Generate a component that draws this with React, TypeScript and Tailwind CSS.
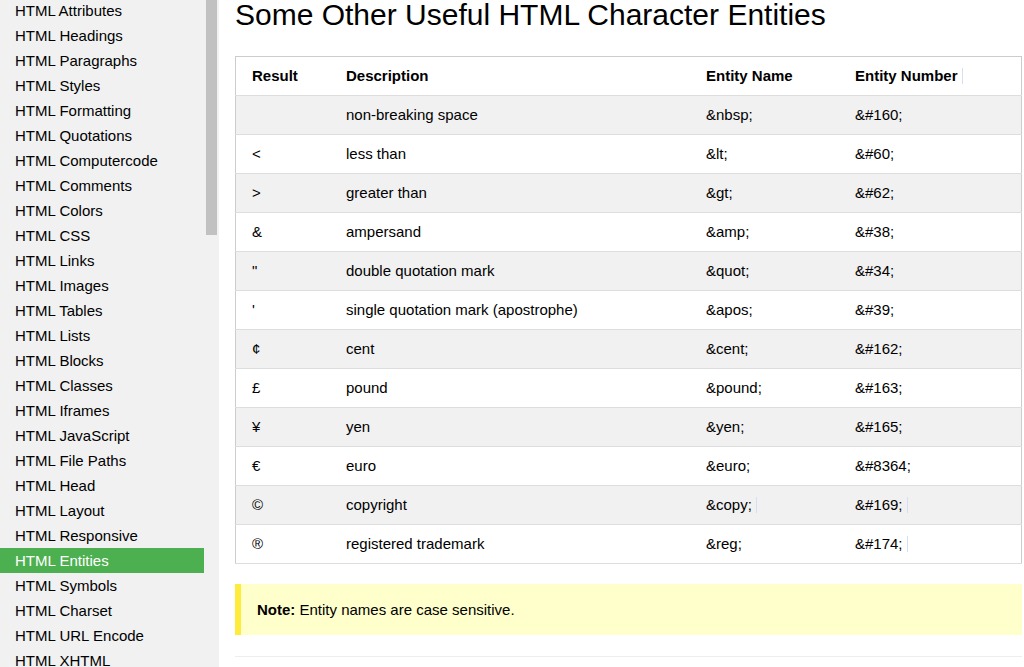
const navItems = [
  'HTML Attributes',
  'HTML Headings',
  'HTML Paragraphs',
  'HTML Styles',
  'HTML Formatting',
  'HTML Quotations',
  'HTML Computercode',
  'HTML Comments',
  'HTML Colors',
  'HTML CSS',
  'HTML Links',
  'HTML Images',
  'HTML Tables',
  'HTML Lists',
  'HTML Blocks',
  'HTML Classes',
  'HTML Iframes',
  'HTML JavaScript',
  'HTML File Paths',
  'HTML Head',
  'HTML Layout',
  'HTML Responsive',
  'HTML Entities',
  'HTML Symbols',
  'HTML Charset',
  'HTML URL Encode',
  'HTML XHTML',
];

type Row = { result: string; desc: string; name: string; num: string; mark?: boolean };

const rows: Row[] = [
  { result: '\u00a0', desc: 'non-breaking space', name: '&nbsp;', num: '&#160;' },
  { result: '<', desc: 'less than', name: '&lt;', num: '&#60;' },
  { result: '>', desc: 'greater than', name: '&gt;', num: '&#62;' },
  { result: '&', desc: 'ampersand', name: '&amp;', num: '&#38;' },
  { result: '"', desc: 'double quotation mark', name: '&quot;', num: '&#34;' },
  { result: "'", desc: 'single quotation mark (apostrophe)', name: '&apos;', num: '&#39;' },
  { result: '¢', desc: 'cent', name: '&cent;', num: '&#162;' },
  { result: '£', desc: 'pound', name: '&pound;', num: '&#163;' },
  { result: '¥', desc: 'yen', name: '&yen;', num: '&#165;' },
  { result: '€', desc: 'euro', name: '&euro;', num: '&#8364;' },
  { result: '©', desc: 'copyright', name: '&copy;', num: '&#169;', mark: true },
  { result: '®', desc: 'registered trademark', name: '&reg;', num: '&#174;', mark: true },
];

// thin caret-like line that shows up after some cells
const Caret = () => (
  <span className="inline-block w-px h-[16px] bg-[#d6deef] align-middle ml-[4px] -mt-[2px]" />
);

const App = () => {
  return (
    <div
      className="flex h-[667px] w-[1024px] overflow-hidden bg-white text-black"
      style={{ fontFamily: '"Liberation Sans", Arial, sans-serif' }}
    >
      {/* Sidebar */}
      <div className="flex w-[219px] shrink-0 bg-[#f1f1f1]">
        <ul className="w-[204px] mt-[-2px]">
          {navItems.map((item) => (
            <li
              key={item}
              className={
                item === 'HTML Entities'
                  ? 'h-[25px] leading-[25px] pl-[15px] text-[15px] bg-[#4caf50] text-white'
                  : 'h-[25px] leading-[25px] pl-[15px] text-[15px] text-black'
              }
            >
              {item}
            </li>
          ))}
        </ul>
        <div className="w-[15px] pl-[2px]">
          <div className="w-[11px] h-[235px] bg-[#c1c1c1]" />
        </div>
      </div>

      {/* Main */}
      <div className="flex-1 pl-4 pr-[2px]">
        <h2 className="text-[30px] leading-[34px] font-normal mt-[-2px] mb-6">
          Some Other Useful HTML Character Entities
        </h2>

        <table className="w-full border border-[#cccccc] border-collapse text-[15px] leading-[22px] table-fixed">
          <colgroup>
            <col className="w-[94.5px]" />
            <col className="w-[360px]" />
            <col className="w-[149px]" />
            <col />
          </colgroup>
          <thead>
            <tr className="border-b border-[#dddddd] bg-white">
              <th className="text-left font-bold py-2 pl-4">Result</th>
              <th className="text-left font-bold py-2 pl-4">Description</th>
              <th className="text-left font-bold py-2 pl-4">Entity Name</th>
              <th className="text-left font-bold py-2 pl-4">
                Entity Number
                <Caret />
              </th>
            </tr>
          </thead>
          <tbody>
            {rows.map((r, i) => (
              <tr
                key={r.desc}
                className={
                  i % 2 === 0
                    ? 'border-b border-[#dddddd] bg-[#f1f1f1]'
                    : 'border-b border-[#dddddd] bg-white'
                }
              >
                <td className="py-2 pl-4">{r.result}</td>
                <td className="py-2 pl-4">{r.desc}</td>
                <td className="py-2 pl-4">
                  {r.name}
                  {r.result === '©' && <Caret />}
                </td>
                <td className="py-2 pl-4">
                  {r.num}
                  {r.mark && <Caret />}
                </td>
              </tr>
            ))}
          </tbody>
        </table>

        <div className="mt-[20px] border-l-[6px] border-[#ffeb3b] bg-[#ffffcc] pl-4 py-[14px] text-[15px] leading-[23px]">
          <b>Note:</b> Entity names are case sensitive.
        </div>

        <hr className="mt-[21px] border-0 border-t border-[#eeeeee]" />
      </div>
    </div>
  );
};

export default App;
